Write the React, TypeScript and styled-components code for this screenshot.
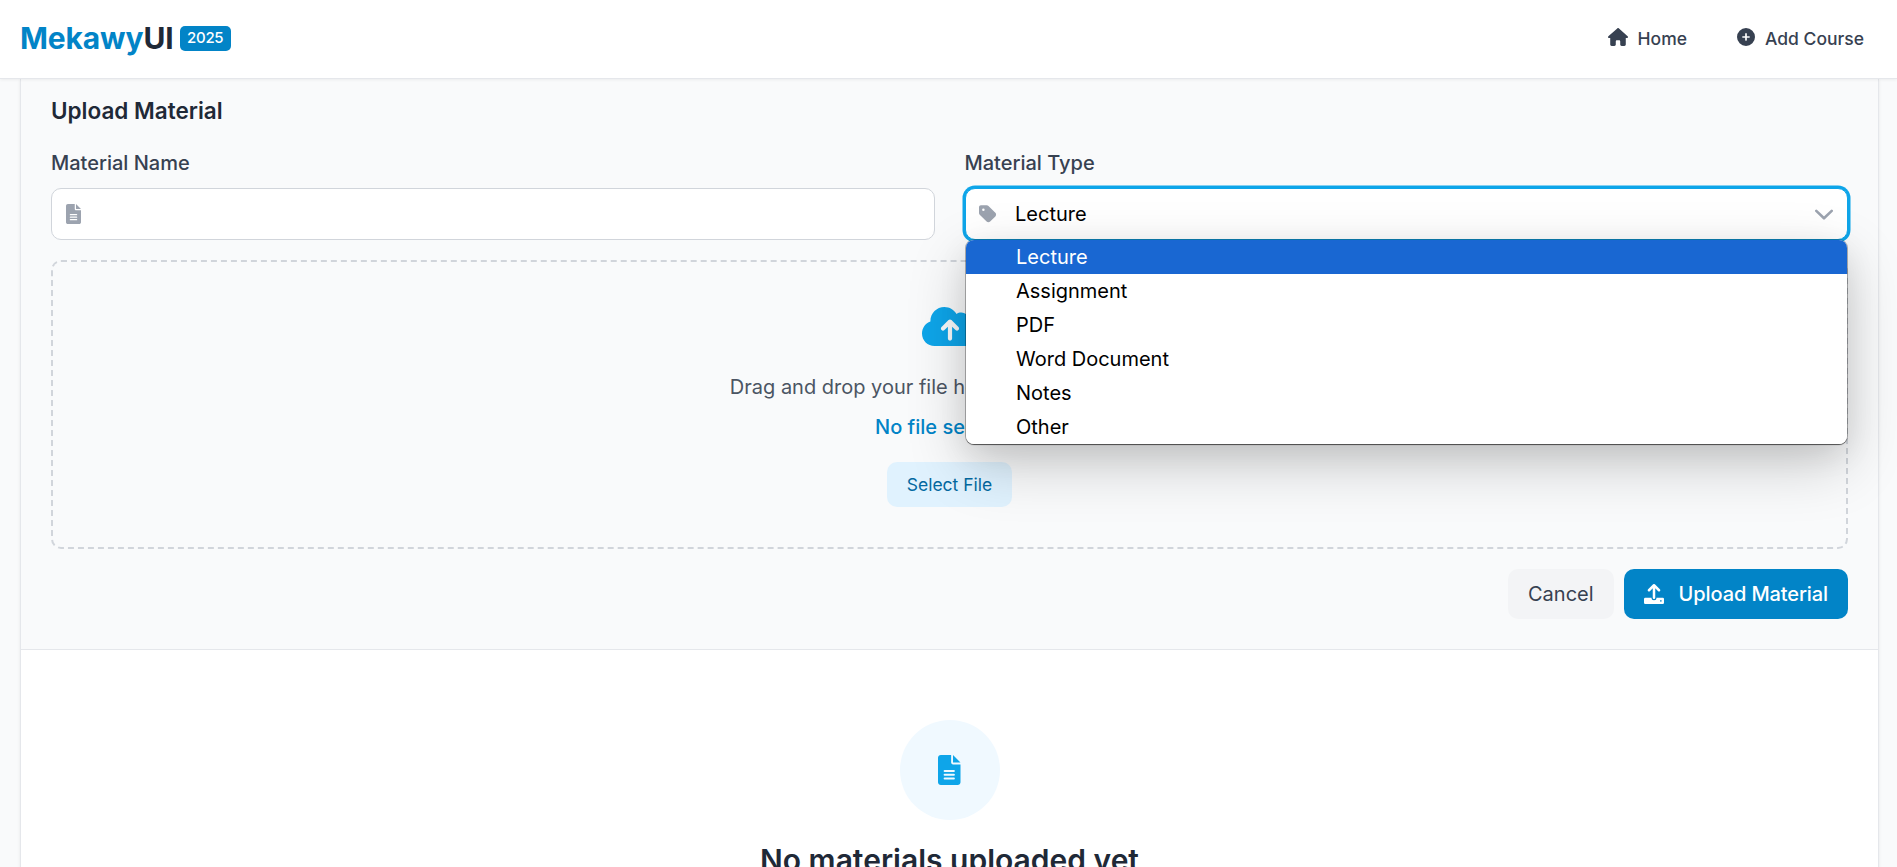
import React from "react";
import styled, { createGlobalStyle, css } from "styled-components";
import { FaHouse, FaCirclePlus, FaCloudArrowUp, FaTag } from "react-icons/fa6";

const GlobalStyle = createGlobalStyle`
  *, *::before, *::after { box-sizing: border-box; }
  body {
    margin: 0;
    height: 867px;
    overflow: hidden;
    background: #f9fafb;
    font-family: Inter, "Liberation Sans", sans-serif;
    font-size: 20px;
    line-height: 30px;
    color: #1f2937;
  }
  svg { display: block; flex: none; }
`;

const Page = styled.div`
  display: flex;
  flex-direction: column;
  height: 867px;
  overflow: hidden;
  background: #f9fafb;
`;

const Header = styled.header`
  position: relative;
  z-index: 2;
  flex: none;
  height: 79px;
  padding: 0 33px 2px 20px;
  display: flex;
  align-items: center;
  justify-content: space-between;
  background: #fff;
  border-bottom: 1px solid #e5e7eb;
  box-shadow: 0 1px 3px rgba(0, 0, 0, 0.06);
`;

const Brand = styled.a`
  display: flex;
  align-items: center;
  font-size: 30px;
  line-height: 40px;
  font-weight: 700;
  letter-spacing: -0.13px;
  color: #1f2937;
`;

const BrandAccent = styled.span`
  color: #0284c7;
`;

const Badge = styled.span`
  height: 25px;
  margin-left: 6px;
  padding: 0 7.5px;
  border-radius: 5px;
  background: #0284c7;
  color: #fff;
  font-size: 15px;
  line-height: 24px;
  font-weight: 500;
  letter-spacing: -0.3px;
`;

const Nav = styled.nav`
  display: flex;
  gap: 50px;
`;

const NavLink = styled.a`
  display: flex;
  align-items: center;
  gap: 10px;
  color: #374151;
  font-size: 17.5px;
  line-height: 25px;
  font-weight: 500;

  svg { position: relative; top: -1px; }
`;

const HouseIcon = styled(FaHouse)`
  width: 20px;
  height: 18px;
`;

const Card = styled.main`
  flex: 1;
  display: flex;
  flex-direction: column;
  margin: 0 18px 0 20px;
  background: #fff;
  border: solid #e5e7eb;
  border-width: 0 1px;
  box-shadow: 0 1px 3px rgba(0, 0, 0, 0.08);
`;

const UploadSection = styled.section`
  flex: none;
  height: 571px;
  padding: 14px 30px 30px;
  background: #f9fafb;
  border-bottom: 1px solid #e5e7eb;
`;

const SectionTitle = styled.h3`
  margin: 0 0 20px;
  font-size: 22.5px;
  line-height: 35px;
  font-weight: 600;
`;

const Fields = styled.div`
  display: grid;
  grid-template-columns: 1fr 1fr;
  gap: 30px;
  margin-bottom: 20px;
`;

const Field = styled.div`
  position: relative;
  display: flex;
  flex-direction: column;
  gap: 10px;
`;

const Label = styled.label`
  color: #374151;
  font-weight: 500;
`;

const Control = styled.div<{ $focused?: boolean }>`
  display: flex;
  align-items: center;
  height: 52px;
  padding: 0 14px 0 13.5px;
  border-radius: 10px;
  background: #fff;
  border: 1px solid #d1d5db;
  color: #9ca3af;
  ${(p) =>
    p.$focused &&
    css`
      border-color: #0ea5e9;
      box-shadow: 0 0 0 2.5px #0ea5e9;
    `}
`;

const TagIcon = styled(FaTag)`
  width: 17.5px;
  height: 20px;
`;

const ControlValue = styled.span`
  flex: 1;
  margin-left: 18.5px;
  color: #000;
`;

const Menu = styled.ul`
  position: absolute;
  z-index: 5;
  top: 92px;
  left: 1.5px;
  right: 1px;
  margin: 0;
  padding: 0;
  list-style: none;
  overflow: hidden;
  border-radius: 8px;
  background: #fff;
  box-shadow: 0 0 0 1px rgba(0, 0, 0, 0.25), 0 1px 1px rgba(0, 0, 0, 0.5),
    0 20px 60px rgba(0, 0, 0, 0.2), 0 10px 30px rgba(0, 0, 0, 0.08);
`;

const Option = styled.li<{ $active?: boolean }>`
  height: 34px;
  padding-left: 50px;
  line-height: 34px;
  color: ${(p) => (p.$active ? "#fff" : "#000")};
  background: ${(p) => (p.$active ? "#1967d2" : "#fff")};
`;

const DropZone = styled.div`
  display: flex;
  flex-direction: column;
  align-items: center;
  height: 289px;
  padding-top: 42px;
  border: 2px dashed #d1d5db;
  border-radius: 10px;
  color: #0ea5e9;
`;

const CloudIcon = styled(FaCloudArrowUp)`
  width: 56px;
  height: 45px;
`;

const DropHint = styled.p`
  margin: 23px 0 0;
  color: #4b5563;
`;

const FileName = styled.p`
  margin: 10px 0 20px;
  color: #0284c7;
  font-weight: 500;
`;

const Button = styled.button<{ $variant: "soft" | "muted" | "primary" }>`
  display: flex;
  align-items: center;
  height: 50px;
  padding: 0 20px;
  border: 0;
  border-radius: 10px;
  font: inherit;
  ${(p) =>
    p.$variant === "soft" &&
    css`
      height: 45px;
      background: #e0f2fe;
      color: #0369a1;
      font-size: 17.5px;
    `}
  ${(p) =>
    p.$variant === "muted" &&
    css`
      background: #f3f4f6;
      color: #374151;
    `}
  ${(p) =>
    p.$variant === "primary" &&
    css`
      gap: 15px;
      background: #0284c7;
      color: #fff;
      font-weight: 500;
      letter-spacing: -0.1px;
    `}
`;

const Actions = styled.div`
  display: flex;
  justify-content: flex-end;
  gap: 10px;
  margin-top: 20px;
`;

const EmptyState = styled.section`
  display: flex;
  flex-direction: column;
  align-items: center;
  padding-top: 70px;
`;

const EmptyIcon = styled.div`
  display: flex;
  align-items: center;
  justify-content: center;
  width: 100px;
  height: 100px;
  border-radius: 50%;
  background: #f0f9ff;
  color: #0ea5e9;
`;

const EmptyTitle = styled.h3`
  margin: 20px 0 0;
  font-size: 30px;
  line-height: 40px;
  font-weight: 600;
  white-space: nowrap;
`;

const OPTIONS = ["Lecture", "Assignment", "PDF", "Word Document", "Notes", "Other"];

function Chevron() {
  return (
    <svg width="18" height="20" viewBox="0 0 18 20" fill="none" stroke="#9ca3af" strokeWidth="2.6" strokeLinecap="round" strokeLinejoin="round">
      <path d="M1.3 6.9 9 14.3l7.7-7.4" />
    </svg>
  );
}

function FileIcon({ size }: { size: number }) {
  return (
    <svg width={size * 0.75} height={size} viewBox="0 0 384 512" fill="currentColor">
      <path
        fillRule="evenodd"
        d="M48 0H224V128c0 17.7 14.3 32 32 32H384V464c0 26.500-21.500 48-48 48H48c-26.500 0-48-21.500-48-48V48C0 21.500 21.500 0 48 0ZM256 0V128H384ZM112 256a16 16 0 0 0 0 32H272a16 16 0 0 0 0-32ZM112 320a16 16 0 0 0 0 32H272a16 16 0 0 0 0-32ZM112 384a16 16 0 0 0 0 32H272a16 16 0 0 0 0-32Z"
      />
    </svg>
  );
}

function UploadIcon() {
  return (
    <svg width="20" height="20" viewBox="0 0 512 512" fill="currentColor">
      <path d="M288 109.300V352a32 32 0 0 1-64 0V109.300l-73.400 73.400a32 32 0 0 1-45.300-45.300l128-128a32 32 0 0 1 45.300 0l128 128a32 32 0 0 1-45.300 45.300Z" />
      <path
        fillRule="evenodd"
        d="M32 352H192a64 64 0 0 0 128 0H480a32 32 0 0 1 32 32V480a32 32 0 0 1-32 32H32a32 32 0 0 1-32-32V384a32 32 0 0 1 32-32ZM432 412a20 20 0 1 0 0 40a20 20 0 0 0 0-40Z"
      />
    </svg>
  );
}

export default function App() {
  return (
    <Page>
      <GlobalStyle />
      <Header>
        <Brand>
          <BrandAccent>Mekawy</BrandAccent>UI
          <Badge>2025</Badge>
        </Brand>
        <Nav>
          <NavLink>
            <HouseIcon />
            Home
          </NavLink>
          <NavLink>
            <FaCirclePlus size={18} />
            Add Course
          </NavLink>
        </Nav>
      </Header>
      <Card>
        <UploadSection>
          <SectionTitle>Upload Material</SectionTitle>
          <Fields>
            <Field>
              <Label>Material Name</Label>
              <Control>
                <FileIcon size={20} />
              </Control>
            </Field>
            <Field>
              <Label>Material Type</Label>
              <Control $focused>
                <TagIcon />
                <ControlValue>Lecture</ControlValue>
                <Chevron />
              </Control>
              <Menu>
                {OPTIONS.map((name, i) => (
                  <Option key={name} $active={i === 0}>
                    {name}
                  </Option>
                ))}
              </Menu>
            </Field>
          </Fields>
          <DropZone>
            <CloudIcon />
            <DropHint>Drag and drop your file here or click to browse</DropHint>
            <FileName>No file selected</FileName>
            <Button $variant="soft">Select File</Button>
          </DropZone>
          <Actions>
            <Button $variant="muted">Cancel</Button>
            <Button $variant="primary">
              <UploadIcon />
              Upload Material
            </Button>
          </Actions>
        </UploadSection>
        <EmptyState>
          <EmptyIcon>
            <FileIcon size={30} />
          </EmptyIcon>
          <EmptyTitle>No materials uploaded yet</EmptyTitle>
        </EmptyState>
      </Card>
    </Page>
  );
}
